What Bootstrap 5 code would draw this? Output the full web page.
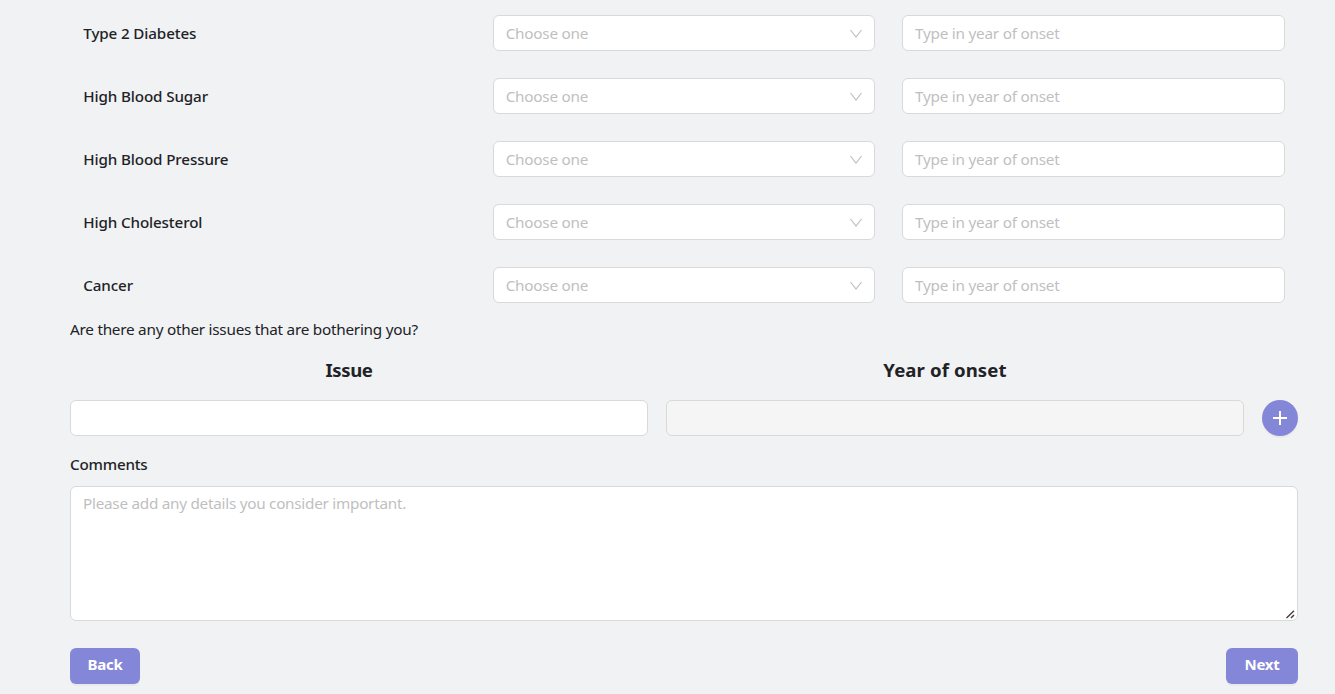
<!DOCTYPE html>
<html lang="en">
<head>
<meta charset="utf-8">
<meta name="viewport" content="width=device-width, initial-scale=1">
<title>Medical history</title>
<link href="https://cdn.jsdelivr.net/npm/bootstrap@5.3.0/dist/css/bootstrap.min.css" rel="stylesheet">
<style>
  body { background: #f0f2f4; color: #222226; font: 400 15.5px/24px "Noto Sans", "Open Sans", sans-serif; height: 694px; overflow: hidden; }
  .survey { width: 1228px; margin-left: 70px; padding-top: 1px; letter-spacing: -.2px; }
  .condition { --bs-gutter-x: 26.6px; height: 63px; margin: 0; }
  .name-label { font-weight: 500; font-size: 15.2px; letter-spacing: -.13px; }
  .field { height: 36px; border: 1px solid #d9d9d9; border-radius: 6px; padding: 4px 12px; font-size: 15.3px; line-height: 26px; letter-spacing: -.23px; background: #fff; box-shadow: none !important; }
  .field::placeholder, .picker { color: #bfbfbf; }
  .field:disabled { background: #f5f5f5; }
  .question { height: 24px; margin-top: 1px; font-size: 15.3px; letter-spacing: -.25px; }
  .heading { font-weight: 700; font-size: 18.6px; line-height: 28px; height: 28px; margin-top: 15px; letter-spacing: .1px; margin-left: -19px; }
  .heading span { flex: 0 0 596px; text-align: center; }
  .heading .issue-head { letter-spacing: -.4px; }
  .entry { gap: 18px; margin-top: 16px; }
  .accent { background: #8486d8 !important; color: #fff; border: 0; box-shadow: 0 2px 0 rgba(5,5,25,.035); }
  .add { width: 36px; height: 36px; flex: none; }
  .comments-label { margin-top: 16px; height: 24px; letter-spacing: -.2px; }
  .comment-wrap { margin-top: 10px; }
  .comment-box { display: block; height: 135px; resize: none; line-height: 25px; letter-spacing: -.27px; }
  .grip { position: absolute; right: 3px; bottom: 2px; }
  .steps { margin-top: 27px; }
  .step { height: 36px; border-radius: 6px; padding: 0 0 5px; font-size: 15px; font-weight: 700; letter-spacing: -.3px; }
  .step-back { width: 70px; } .step-next { width: 72px; }
</style>
</head>
<body>
<main class="survey">
  <div class="row condition align-items-center">
    <div class="col-4 name-label"><span>Type 2 Diabetes</span></div>
    <div class="col-4"><button type="button" class="field picker w-100 d-flex align-items-center justify-content-between"><span>Choose one</span><svg width="12" height="12" viewBox="0 0 12 12" fill="none" stroke="#bfbfbf" stroke-width="1.2"><path d="M.5 3 6 10 11.5 3"/></svg></button></div>
    <div class="col-4"><input class="field form-control" placeholder="Type in year of onset"></div>
  </div>
  <div class="row condition align-items-center">
    <div class="col-4 name-label"><span>High Blood Sugar</span></div>
    <div class="col-4"><button type="button" class="field picker w-100 d-flex align-items-center justify-content-between"><span>Choose one</span><svg width="12" height="12" viewBox="0 0 12 12" fill="none" stroke="#bfbfbf" stroke-width="1.2"><path d="M.5 3 6 10 11.5 3"/></svg></button></div>
    <div class="col-4"><input class="field form-control" placeholder="Type in year of onset"></div>
  </div>
  <div class="row condition align-items-center">
    <div class="col-4 name-label"><span>High Blood Pressure</span></div>
    <div class="col-4"><button type="button" class="field picker w-100 d-flex align-items-center justify-content-between"><span>Choose one</span><svg width="12" height="12" viewBox="0 0 12 12" fill="none" stroke="#bfbfbf" stroke-width="1.2"><path d="M.5 3 6 10 11.5 3"/></svg></button></div>
    <div class="col-4"><input class="field form-control" placeholder="Type in year of onset"></div>
  </div>
  <div class="row condition align-items-center">
    <div class="col-4 name-label"><span>High Cholesterol</span></div>
    <div class="col-4"><button type="button" class="field picker w-100 d-flex align-items-center justify-content-between"><span>Choose one</span><svg width="12" height="12" viewBox="0 0 12 12" fill="none" stroke="#bfbfbf" stroke-width="1.2"><path d="M.5 3 6 10 11.5 3"/></svg></button></div>
    <div class="col-4"><input class="field form-control" placeholder="Type in year of onset"></div>
  </div>
  <div class="row condition align-items-center">
    <div class="col-4 name-label"><span>Cancer</span></div>
    <div class="col-4"><button type="button" class="field picker w-100 d-flex align-items-center justify-content-between"><span>Choose one</span><svg width="12" height="12" viewBox="0 0 12 12" fill="none" stroke="#bfbfbf" stroke-width="1.2"><path d="M.5 3 6 10 11.5 3"/></svg></button></div>
    <div class="col-4"><input class="field form-control" placeholder="Type in year of onset"></div>
  </div>
  <div class="question"><span>Are there any other issues that are bothering you?</span></div>
  <div class="heading d-flex"><span class="issue-head">Issue</span><span>Year of onset</span></div>
  <div class="entry d-flex">
    <input class="field form-control" aria-label="Issue">
    <input class="field form-control" aria-label="Year of onset" disabled>
    <button type="button" class="add accent rounded-circle p-0 d-flex align-items-center justify-content-center" aria-label="Add"><svg width="14" height="14" viewBox="0 0 14 14" fill="#fff"><path d="M6 0h2v6h6v2H8v6H6V8H0V6h6z"/></svg></button>
  </div>
  <label class="comments-label name-label d-block" for="comments"><span>Comments</span></label>
  <div class="comment-wrap position-relative">
    <textarea id="comments" class="field form-control comment-box" placeholder="Please add any details you consider important."></textarea>
    <svg class="grip" width="9" height="9" viewBox="0 0 9 9" stroke="#4a4040" stroke-width="1.5" fill="none"><path d="M.5 8 8 .8M5 8 8 5"/></svg>
  </div>
  <div class="steps d-flex justify-content-between">
    <button type="button" class="step step-back accent">Back</button>
    <button type="button" class="step step-next accent">Next</button>
  </div>
</main>
<script src="https://cdn.jsdelivr.net/npm/bootstrap@5.3.0/dist/js/bootstrap.bundle.min.js"></script>
</body>
</html>
